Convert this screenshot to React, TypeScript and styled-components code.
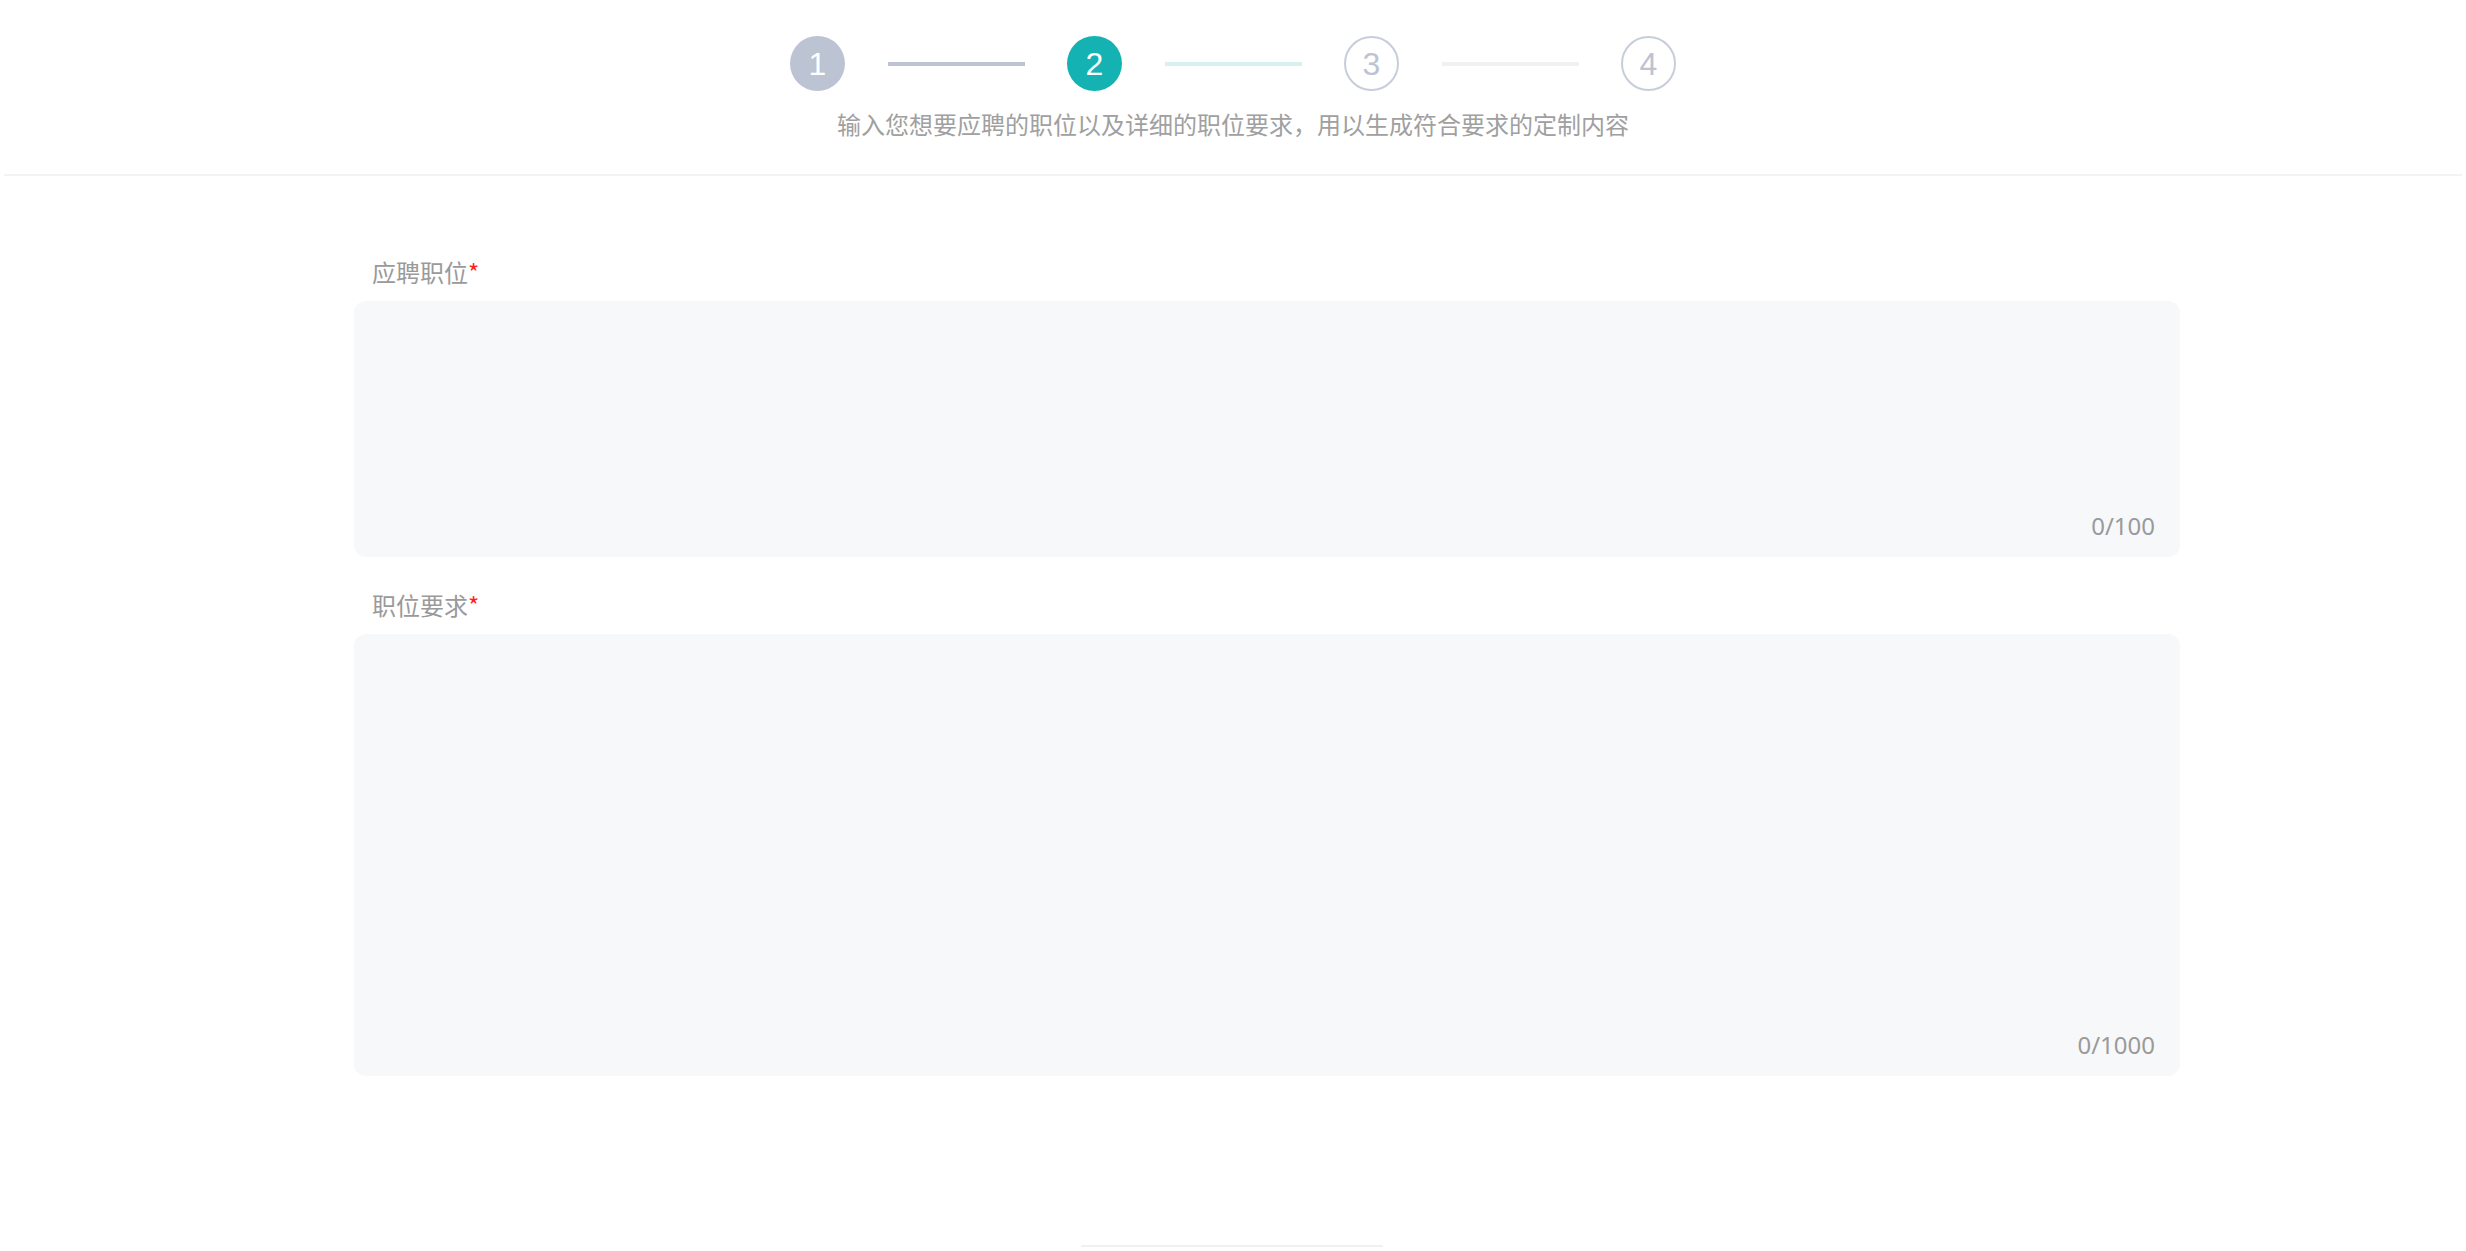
import React from "react";
import styled, { createGlobalStyle } from "styled-components";

const GlobalStyle = createGlobalStyle`
  html, body {
    margin: 0;
    padding: 0;
    background: #ffffff;
    font-family: "Noto Sans", "Noto Sans CJK SC", sans-serif;
  }
  * { box-sizing: border-box; }
`;

const Page = styled.div`
  width: 2466px;
  min-height: 1251px;
  background: #fff;
  display: flex;
  flex-direction: column;
`;

const Header = styled.header`
  margin: 0 4px;
  padding: 36px 0 34px;
  border-bottom: 2px solid #f3f3f4;
  display: flex;
  flex-direction: column;
  align-items: center;
`;

const Stepper = styled.div`
  display: flex;
  align-items: center;
`;

type StepState = "done" | "active" | "todo";

const Circle = styled.div<{ $state: StepState }>`
  width: 55px;
  height: 55px;
  border-radius: 50%;
  display: flex;
  align-items: center;
  justify-content: center;
  font-family: "Liberation Sans", "Noto Sans", sans-serif;
  font-size: 32px;
  line-height: 1;
  background: ${(p) =>
    p.$state === "done" ? "#bcc3d3" : p.$state === "active" ? "#14b2b2" : "#ffffff"};
  color: ${(p) => (p.$state === "todo" ? "#bcc3d3" : "#ffffff")};
  border: ${(p) => (p.$state === "todo" ? "2px solid #c8cddb" : "none")};
`;

const Connector = styled.div<{ $color: string }>`
  width: 137px;
  height: 4px;
  margin: 0 42px 0 43px;
  background: ${(p) => p.$color};
`;

const Subtitle = styled.p`
  margin: 17px 0 0;
  font-family: "Noto Sans CJK SC", sans-serif;
  font-size: 24px;
  line-height: 32px;
  color: #a0a0a0;
`;

const Form = styled.main`
  margin: 80px 286px 0 354px;
  display: flex;
  flex-direction: column;
`;

const Field = styled.section<{ $gap: number }>`
  display: flex;
  flex-direction: column;
  margin-bottom: ${(p) => p.$gap}px;
`;

const Label = styled.label`
  padding-left: 18px;
  font-family: "Noto Sans CJK SC", sans-serif;
  font-size: 24px;
  line-height: 32px;
  color: #9a9a9a;
  margin-bottom: 13px;
`;

const Required = styled.span`
  color: #ff1f1f;
`;

const AreaWrap = styled.div`
  position: relative;
`;

const Area = styled.textarea<{ $height: number }>`
  display: block;
  width: 100%;
  height: ${(p) => p.$height}px;
  border: none;
  outline: none;
  resize: none;
  border-radius: 12px;
  background: #f7f8fa;
  padding: 18px 20px;
  font-family: "Noto Sans CJK SC", sans-serif;
  font-size: 24px;
  color: #333;
`;

const Counter = styled.span`
  position: absolute;
  right: 25px;
  bottom: 17px;
  font-family: "Noto Sans", sans-serif;
  font-size: 24px;
  line-height: 28px;
  color: #9a9a9a;
`;

const Footer = styled.footer`
  margin-top: 169px;
  display: flex;
  justify-content: center;
`;

const FooterEdge = styled.div`
  width: 302px;
  height: 4px;
  border-top: 2px solid #eef2f2;
  margin-left: -2px;
`;

const steps: { n: number; state: StepState }[] = [
  { n: 1, state: "done" },
  { n: 2, state: "active" },
  { n: 3, state: "todo" },
  { n: 4, state: "todo" },
];
const connectorColors = ["#bcc3d3", "#d6f1f2", "#f0f1f3"];

export default function App() {
  return (
    <Page>
      <GlobalStyle />
      <Header>
        <Stepper>
          {steps.map((s, i) => (
            <React.Fragment key={s.n}>
              <Circle $state={s.state}>{s.n}</Circle>
              {i < steps.length - 1 && <Connector $color={connectorColors[i]} />}
            </React.Fragment>
          ))}
        </Stepper>
        <Subtitle>输入您想要应聘的职位以及详细的职位要求，用以生成符合要求的定制内容</Subtitle>
      </Header>
      <Form>
        <Field $gap={32}>
          <Label>
            应聘职位<Required>*</Required>
          </Label>
          <AreaWrap>
            <Area $height={256} />
            <Counter>0/100</Counter>
          </AreaWrap>
        </Field>
        <Field $gap={0}>
          <Label>
            职位要求<Required>*</Required>
          </Label>
          <AreaWrap>
            <Area $height={442} />
            <Counter>0/1000</Counter>
          </AreaWrap>
        </Field>
      </Form>
      <Footer>
        <FooterEdge />
      </Footer>
    </Page>
  );
}
